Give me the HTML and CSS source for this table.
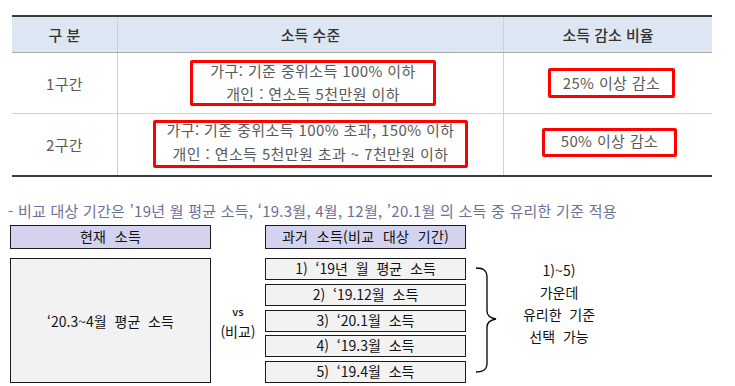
FILE: index.html
```html
<!DOCTYPE html>
<html lang="ko">
<head>
<meta charset="utf-8">
<link rel="stylesheet" href="styles.css">
</head>
<body>
<table class="levels">
  <thead>
    <tr>
      <th class="c1">구 분</th>
      <th class="c2">소득 수준</th>
      <th class="c3">소득 감소 비율</th>
    </tr>
  </thead>
  <tbody>
    <tr class="r1">
      <td>1구간</td>
      <td><div class="mark mark-a"><div class="lines">가구: 기준 중위소득 100% 이하<br>개인 : 연소득 5천만원 이하</div></div></td>
      <td><div class="mark mark-c">25% 이상 감소</div></td>
    </tr>
    <tr class="r2">
      <td>2구간</td>
      <td><div class="mark mark-b"><div class="lines">가구: 기준 중위소득 100% 초과, 150% 이하<br>개인 : 연소득 5천만원 초과 ~ 7천만원 이하</div></div></td>
      <td><div class="mark mark-d">50% 이상 감소</div></td>
    </tr>
  </tbody>
</table>

<p class="note">- 비교 대상 기간은 ’19년 월 평균 소득, ‘19.3월, 4월, 12월, ’20.1월 의 소득 중 유리한 기준 적용</p>

<div class="compare">
  <div class="col">
    <div class="head">현재  소득</div>
    <div class="current">‘20.3~4월  평균  소득</div>
  </div>
  <div class="vs"><span>vs</span><span>(비교)</span></div>
  <div class="col">
    <div class="head">과거  소득(비교  대상  기간)</div>
    <div class="list">
      <div class="item">1)  ‘19년  월  평균  소득</div>
      <div class="item">2)  ‘19.12월  소득</div>
      <div class="item">3)  ‘20.1월  소득</div>
      <div class="item">4)  ‘19.3월  소득</div>
      <div class="item">5)  ‘19.4월  소득</div>
    </div>
  </div>
  <svg class="brace" width="24" height="106" viewBox="0 0 24 106">
    <path d="M1 1 C8 1 12 3 12 10 L12 44 C12 49 15 51 21 52 C15 53 12 55 12 60 L12 96 C12 103 8 105 1 105" fill="none" stroke="#000" stroke-width="1.3"/>
  </svg>
  <div class="pick">
    <span>1)~5)</span>
    <span>가운데</span>
    <span>유리한  기준</span>
    <span>선택  가능</span>
  </div>
</div>
</body>
</html>
```
FILE: styles.css
```css
html, body {
  margin: 0;
  padding: 0;
  background: #fff;
}
body {
  font-family: "Noto Sans CJK KR", "Noto Sans", sans-serif;
}

.levels {
  margin: 15px 0 0 12px;
  width: 700px;
  border-collapse: collapse;
  table-layout: fixed;
  border-top: 2px solid #3a3a3a;
  border-bottom: 2px solid #3a3a3a;
}
.levels th {
  height: 35px;
  background: #dde7f4;
  color: #333;
  font-size: 15px;
  font-weight: 500;
  border-bottom: 1px solid #a8a8a8;
  padding: 0;
}
.levels td {
  text-align: center;
  color: #595959;
  font-size: 15px;
  letter-spacing: 0.4px;
  padding: 0;
}
.levels .c1 { width: 105px; }
.levels .c2 { width: 385px; }
.levels th + th,
.levels td + td { border-left: 1px solid #d0d0d0; }
.levels .r1 td { height: 60px; border-bottom: 1px solid #d0d0d0; }
.levels .r2 td { height: 61px; }

.mark {
  display: inline-block;
  border: 3px solid #ff0000;
  border-radius: 2px;
  box-sizing: border-box;
  line-height: 22px;
  vertical-align: middle;
  white-space: nowrap;
}
.lines {
  line-height: 23px;
  margin-top: -4px;
}
.mark-a { width: 246px; height: 46px; margin-left: 5px; }
.mark-b { width: 315px; height: 48px; margin-top: -2px; }
.mark-b .lines { line-height: 24px; margin-top: -5px; }
.mark-c { width: 127px; height: 30px; line-height: 23px; margin-left: 7px; }
.mark-d { width: 135px; height: 29px; line-height: 20px; margin-left: 3px; margin-top: -4px; }

.note {
  margin: 24px 0 0 8px;
  font-size: 15px;
  letter-spacing: 0.25px;
  line-height: 20px;
  color: #6c7097;
  white-space: nowrap;
}

.compare {
  display: flex;
  align-items: flex-start;
  margin: 4px 0 0 10px;
  color: #111;
  font-size: 14px;
}
.col {
  width: 201px;
  display: flex;
  flex-direction: column;
  gap: 9px;
}
.head {
  height: 24px;
  box-sizing: border-box;
  border: 1.5px solid #1a1a1a;
  background: #d3d3f0;
  text-align: center;
  line-height: 20px;
  white-space: pre;
  letter-spacing: 0.3px;
}
.current {
  height: 125px;
  box-sizing: border-box;
  border: 1.5px solid #1a1a1a;
  background: #f2f2f2;
  display: flex;
  align-items: center;
  justify-content: center;
  white-space: pre;
}
.vs {
  width: 54px;
  height: 158px;
  padding-top: 33px;
  box-sizing: border-box;
  display: flex;
  flex-direction: column;
  justify-content: center;
  align-items: center;
  line-height: 20px;
  font-size: 14px;
}
.vs span:first-child { font-size: 11px; font-weight: 500; }
.list {
  height: 125px;
  display: flex;
  flex-direction: column;
  justify-content: space-between;
}
.item {
  height: 22px;
  box-sizing: border-box;
  border: 1.5px solid #1a1a1a;
  background: #f2f2f2;
  text-align: center;
  line-height: 18px;
  white-space: pre;
}
.brace {
  margin: 42px 0 0 9px;
}
.pick {
  width: 120px;
  margin-top: 34px;
  display: flex;
  flex-direction: column;
  align-items: center;
  line-height: 22px;
  white-space: pre;
}
```
